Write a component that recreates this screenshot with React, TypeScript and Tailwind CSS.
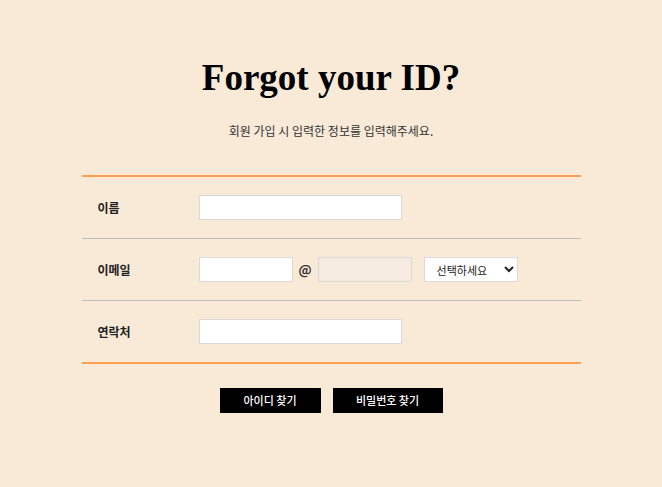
import React from 'react';

const kr = "font-['Malgun_Gothic','Noto_Sans_CJK_KR',sans-serif]";

const Row: React.FC<{ label: string; last?: boolean; children: React.ReactNode }> = ({ label, last, children }) => (
  <div className={`flex items-center ${last ? 'h-[61px]' : 'h-[62px] border-b border-[#bdbdbd]'}`}>
    <div className="w-[117px] pl-4 text-[12px] font-bold text-[#222]">{label}</div>
    <div className="flex items-center">{children}</div>
  </div>
);

export default function App() {
  return (
    <div className={`min-h-[487px] w-full bg-[#f8ead7] ${kr}`}>
      <div className="pt-[56px] text-center">
        <h1 className="font-['Liberation_Serif',serif] text-[37px] font-bold leading-[44px] text-black">
          Forgot your ID?
        </h1>
        <p className="mt-[23px] text-[12px] leading-[16px] text-[#333]">
          회원 가입 시 입력한 정보를 입력해주세요.
        </p>
      </div>

      <div className="mx-auto mt-[36px] w-[499px] border-t-2 border-b-2 border-[#ff9f50]">
        <Row label="이름">
          <input className="h-[25px] w-[203px] border border-[#dadada] bg-white outline-none" />
        </Row>
        <Row label="이메일">
          <input className="h-[25px] w-[94px] border border-[#dadada] bg-white outline-none" />
          <span className="mx-[6px] text-[13px] font-bold text-[#333]">@</span>
          <input disabled className="h-[25px] w-[94px] border border-[#dadada] bg-[#f6ebdf] outline-none" />
          <select className="ml-[12px] h-[25px] w-[94px] border border-[#dadada] bg-white pl-[8px] text-[11px] text-[#222] outline-none">
            <option>선택하세요</option>
          </select>
        </Row>
        <Row label="연락처" last>
          <input className="h-[25px] w-[203px] border border-[#dadada] bg-white outline-none" />
        </Row>
      </div>

      <div className="mt-[24px] flex justify-center gap-[12px]">
        <button className="h-[25px] w-[101px] bg-black text-[11px] font-medium text-white">아이디 찾기</button>
        <button className="h-[25px] w-[110px] bg-black text-[11px] font-medium text-white">비밀번호 찾기</button>
      </div>
    </div>
  );
}
